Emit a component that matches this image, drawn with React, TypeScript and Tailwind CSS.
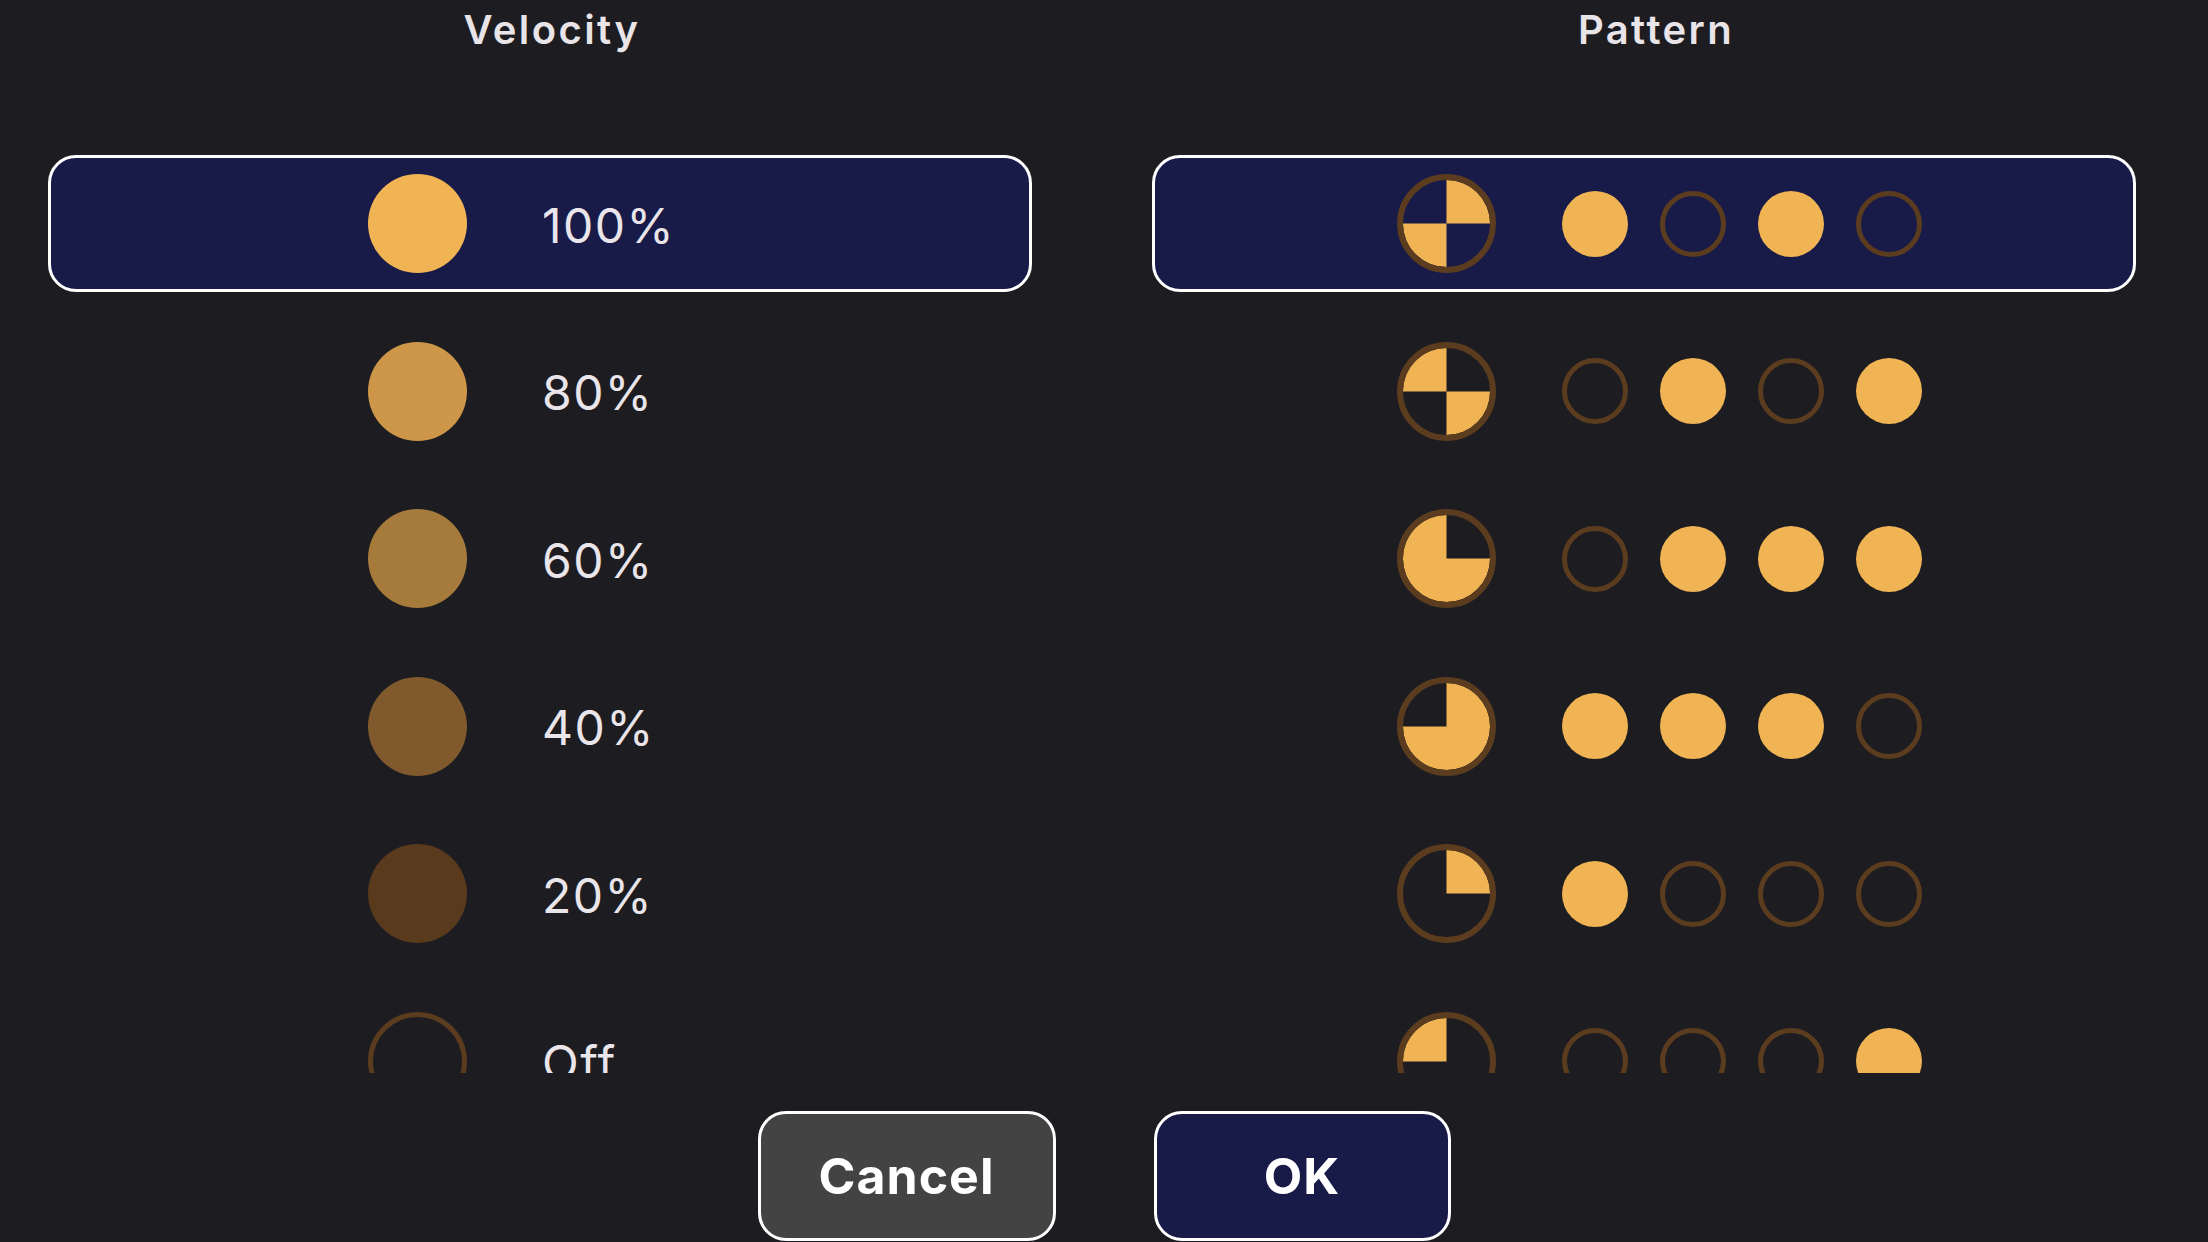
import React from 'react';

const FILL = '#F0B455';
const RING = '#5B3C1E';

type Quad = 'tl' | 'tr' | 'br' | 'bl' | 'no-tr' | 'no-tl';

// Pie paths in a 100x100 box, radius 44 inside a 6px ring
const quadPaths: Record<Quad, string> = {
  tl: 'M50 50 L50 6 A44 44 0 0 0 6 50 Z',
  tr: 'M50 50 L50 6 A44 44 0 0 1 94 50 Z',
  br: 'M50 50 L94 50 A44 44 0 0 1 50 94 Z',
  bl: 'M50 50 L50 94 A44 44 0 0 1 6 50 Z',
  'no-tr': 'M50 50 L50 6 A44 44 0 1 0 94 50 Z',
  'no-tl': 'M50 50 L6 50 A44 44 0 1 0 50 6 Z',
};

const velocities = [
  { label: '100%', color: '#F0B455' },
  { label: '80%', color: '#CE9648' },
  { label: '60%', color: '#A57A3B' },
  { label: '40%', color: '#80592D' },
  { label: '20%', color: '#5A3A1D' },
  { label: 'Off', color: null },
];

const patterns: { pie: Quad[]; dots: boolean[] }[] = [
  { pie: ['tr', 'bl'], dots: [true, false, true, false] },
  { pie: ['tl', 'br'], dots: [false, true, false, true] },
  { pie: ['no-tr'], dots: [false, true, true, true] },
  { pie: ['no-tl'], dots: [true, true, true, false] },
  { pie: ['tr'], dots: [true, false, false, false] },
  { pie: ['tl'], dots: [false, false, false, true] },
];

function Pie({ parts }: { parts: Quad[] }) {
  return (
    <svg width="99" height="99" viewBox="0 0 100 100" className="shrink-0">
      {parts.map(p => (
        <path key={p} d={quadPaths[p]} fill={FILL} />
      ))}
      <circle cx="50" cy="50" r="47" fill="none" stroke={RING} strokeWidth="6" />
    </svg>
  );
}

function Dot({ on }: { on: boolean }) {
  return (
    <svg width="66" height="66" viewBox="0 0 66 66" className="shrink-0">
      {on ? (
        <circle cx="33" cy="33" r="33" fill={FILL} />
      ) : (
        <circle cx="33" cy="33" r="30.5" fill="none" stroke={RING} strokeWidth="5" />
      )}
    </svg>
  );
}

function Row({ selected, children }: { selected: boolean; children: React.ReactNode }) {
  return (
    <div className="h-[167.5px] shrink-0 flex items-center">
      <div
        className={
          'w-full h-[137px] rounded-[28px] border-[3px] flex items-center ' +
          (selected ? 'bg-[#181A48] border-white' : 'border-transparent')
        }
      >
        {children}
      </div>
    </div>
  );
}

export default function App() {
  return (
    <div
      className="w-[2208px] h-[1242px] overflow-hidden bg-[#1C1C21] flex flex-col"
      style={{ fontFamily: 'Inter, "Noto Sans", sans-serif' }}
    >
      <div className="grid grid-cols-2">
        {/* Velocity column */}
        <div className="flex flex-col">
          <div className="h-[140px]">
            <div className="h-[60px] leading-[60px] text-center text-[40px] font-semibold tracking-[0.06em] text-[#E8E4E8]">
              Velocity
            </div>
          </div>
          <div className="h-[933px] overflow-hidden pl-[48px] pr-[72px] flex flex-col">
            {velocities.map((v, i) => (
              <Row key={v.label} selected={i === 0}>
                <div className="pl-[317px] flex items-center">
                  {v.color ? (
                    <div className="w-[99px] h-[99px] rounded-full shrink-0" style={{ backgroundColor: v.color }} />
                  ) : (
                    <div className="w-[99px] h-[99px] rounded-full shrink-0 border-[5px] border-[#5B3C1E]" />
                  )}
                  <div className="ml-[75px] mt-[4px] text-[48px] leading-none tracking-[0.03em] text-[#E9E5EA]">
                    {v.label}
                  </div>
                </div>
              </Row>
            ))}
          </div>
        </div>

        {/* Pattern column */}
        <div className="flex flex-col">
          <div className="h-[140px]">
            <div className="h-[60px] leading-[60px] text-center text-[40px] font-semibold tracking-[0.06em] text-[#E8E4E8]">
              Pattern
            </div>
          </div>
          <div className="h-[933px] overflow-hidden pl-[48px] pr-[72px] flex flex-col">
            {patterns.map((p, i) => (
              <Row key={i} selected={i === 0}>
                <div className="pl-[242px] flex items-center">
                  <Pie parts={p.pie} />
                  <div className="ml-[66px] flex items-center gap-[32px]">
                    {p.dots.map((d, j) => (
                      <Dot key={j} on={d} />
                    ))}
                  </div>
                </div>
              </Row>
            ))}
          </div>
        </div>
      </div>

      {/* Buttons */}
      <div className="pt-[38px] flex justify-center gap-[98px]">
        <button className="w-[298px] h-[130px] rounded-[28px] border-[3px] border-white bg-[#434343] text-white text-[50px] font-bold tracking-[0.02em]">
          Cancel
        </button>
        <button className="w-[297px] h-[130px] rounded-[28px] border-[3px] border-white bg-[#181A48] text-white text-[50px] font-bold tracking-[0.02em]">
          OK
        </button>
      </div>
    </div>
  );
}
